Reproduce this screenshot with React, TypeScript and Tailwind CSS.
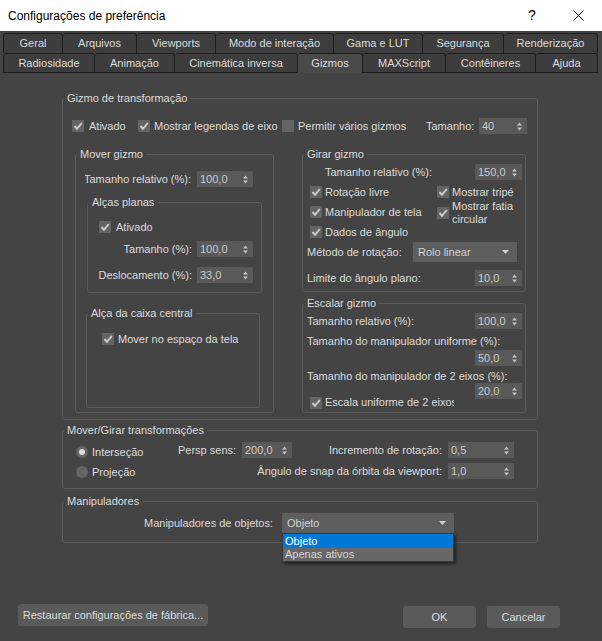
import React from 'react';

const row1 = [
  ['Geral', 'w-[60px]'],
  ['Arquivos', 'w-[74px]'],
  ['Viewports', 'w-[79px]'],
  ['Modo de interação', 'w-[118px]'],
  ['Gama e LUT', 'w-[89px]'],
  ['Segurança', 'w-[81px]'],
  ['Renderização', 'w-[94px]'],
];

const row2 = [
  ['Radiosidade', 'w-[92px]'],
  ['Animação', 'w-[80px]'],
  ['Cinemática inversa', 'w-[123px]'],
  ['Gizmos', 'w-[65px]'],
  ['MAXScript', 'w-[83px]'],
  ['Contêineres', 'w-[90px]'],
  ['Ajuda', 'w-[62px]'],
];

function Arrows() {
  return (
    <svg width="5" height="9" viewBox="0 0 5 9" className="shrink-0">
      <path d="M0 3.5 L2.5 0.5 L5 3.5 Z M0 5.5 L2.5 8.5 L5 5.5 Z" fill="#c4c4c4" />
    </svg>
  );
}

function Spin({ v, className = '' }: { v: string; className?: string }) {
  return (
    <div className={`flex h-[16px] shrink-0 items-center justify-between bg-[#595959] pl-[3px] pr-[5px] text-[#cacaca] ${className}`}>
      <span>{v}</span>
      <Arrows />
    </div>
  );
}

function Check({ on = true }: { on?: boolean }) {
  return (
    <span className="flex h-[12px] w-[12px] shrink-0 items-center justify-center bg-[#646464]">
      {on && (
        <svg width="10" height="10" viewBox="0 0 10 10">
          <path d="M1.5 5 L4 7.8 L8.8 2" fill="none" stroke="#cfcfcf" strokeWidth="1.9" />
        </svg>
      )}
    </span>
  );
}

function Radio({ on }: { on?: boolean }) {
  return (
    <span className="flex h-[12px] w-[12px] shrink-0 items-center justify-center rounded-full bg-[#646464]">
      {on && <span className="h-[6px] w-[6px] rounded-full bg-[#dedede]" />}
    </span>
  );
}

function Select({ value, className = '' }: { value: string; className?: string }) {
  return (
    <div className={`flex items-center justify-between bg-[#5e5e5e] pl-[5px] pr-[8px] text-[#d2d2d2] ${className}`}>
      <span>{value}</span>
      <svg width="7" height="4" viewBox="0 0 7 4">
        <path d="M0 0 H7 L3.5 4 Z" fill="#d0d0d0" />
      </svg>
    </div>
  );
}

function Group({ title, className = '', children }: { title: string; className?: string; children?: React.ReactNode }) {
  return (
    <fieldset className={`shrink-0 rounded-[3px] border border-[#5b5b5b] ${className}`}>
      <legend className="ml-[1px] px-[3px] leading-[13px]">{title}</legend>
      {children}
    </fieldset>
  );
}

function Tab({ label, w, first, active, bottom }: { label: string; w: string; first?: boolean; active?: boolean; bottom?: boolean }) {
  return (
    <div
      className={`flex h-[20px] items-center justify-center rounded-t-[3px] border-t border-r border-[#1c1c1c] ${w} ${first ? 'border-l' : ''} ${
        active ? 'bg-[#4a4a4a]' : 'bg-[#3d3d3d]'
      } ${bottom && !active ? 'border-b' : ''}`}
    >
      {label}
    </div>
  );
}

export default function App() {
  return (
    <div className="flex h-[641px] w-[602px] flex-col overflow-hidden bg-[#444444] font-['Liberation_Sans',Arial,sans-serif] text-[11px] text-[#dcdcdc]">
      {/* title bar */}
      <div className="flex h-[31px] shrink-0 items-center bg-white pl-[8px] text-[12px] text-black">
        <span className="flex-1">Configurações de preferência</span>
        <span className="flex h-full w-[46px] items-center justify-center text-[14px]">?</span>
        <span className="mr-[1px] flex h-full w-[46px] items-center justify-center">
          <svg width="11" height="11" viewBox="0 0 11 11">
            <path d="M0.5 0.5 L10.5 10.5 M10.5 0.5 L0.5 10.5" stroke="#111" strokeWidth="1" />
          </svg>
        </span>
      </div>

      {/* tabs */}
      <div className="mt-[2px] flex shrink-0 px-[3px]">
        {row1.map(([l, w], i) => (
          <Tab key={l} label={l} w={w} first={i === 0} />
        ))}
      </div>
      <div className="flex shrink-0 px-[3px]">
        {row2.map(([l, w], i) => (
          <Tab key={l} label={l} w={w} first={i === 0} active={l === 'Gizmos'} bottom />
        ))}
      </div>

      {/* transform gizmo */}
      <Group title="Gizmo de transformação" className="ml-[62px] mt-[19px] h-[328px] w-[476px]">
        <div className="mt-[13px] flex h-[16px] items-center pl-[9px]">
          <label className="flex w-[66px] items-center gap-[5px]">
            <Check />
            Ativado
          </label>
          <label className="flex w-[144px] items-center gap-[4px]">
            <Check />
            Mostrar legendas de eixo
          </label>
          <label className="flex w-[144px] items-center gap-[4px]">
            <Check on={false} />
            Permitir vários gizmos
          </label>
          <span className="w-[53px]">Tamanho:</span>
          <Spin v="40" className="w-[48px]" />
        </div>

        <div className="mt-[14px] flex pl-[12px]">
          <Group title="Mover gizmo" className="h-[265px] w-[199px]">
            <div className="mt-[10px] flex h-[16px] items-center pl-[9px]">
              <span className="flex w-[106px] justify-end overflow-hidden whitespace-nowrap">Tamanho relativo (%):</span>
              <Spin v="100,0" className="ml-[6px] w-[56px]" />
            </div>

            <Group title="Alças planas" className="ml-[11px] mt-[9px] h-[97px] w-[175px]">
              <label className="mt-[10px] flex h-[16px] items-center gap-[5px] pl-[11px]">
                <Check />
                Ativado
              </label>
              <div className="mt-[6px] flex h-[16px] items-center">
                <span className="w-[104px] text-right">Tamanho (%):</span>
                <Spin v="100,0" className="ml-[5px] w-[56px]" />
              </div>
              <div className="mt-[10px] flex h-[16px] items-center">
                <span className="w-[104px] text-right">Deslocamento (%):</span>
                <Spin v="33,0" className="ml-[5px] w-[56px]" />
              </div>
            </Group>

            <Group title="Alça da caixa central" className="ml-[10px] mt-[14px] h-[101px] w-[174px]">
              <label className="mt-[11px] flex h-[16px] items-center gap-[4px] pl-[15px]">
                <Check />
                Mover no espaço da tela
              </label>
            </Group>
          </Group>

          <div className="ml-[28px] flex w-[224px] flex-col">
            <Group title="Girar gizmo" className="h-[144px] w-[224px]">
              <div className="mt-[3px] flex h-[16px] items-center pl-[22px] pr-[3px]">
                <span className="flex-1">Tamanho relativo (%):</span>
                <Spin v="150,0" className="w-[47px]" />
              </div>
              <div className="mt-[4px] flex pl-[7px]">
                <div className="flex w-[127px] flex-col gap-[4px]">
                  <label className="flex h-[16px] items-center gap-[3px]">
                    <Check />
                    Rotação livre
                  </label>
                  <label className="flex h-[16px] items-center gap-[3px]">
                    <Check />
                    Manipulador de tela
                  </label>
                  <label className="flex h-[16px] items-center gap-[3px]">
                    <Check />
                    Dados de ângulo
                  </label>
                </div>
                <div className="flex flex-col">
                  <label className="flex h-[16px] items-center gap-[3px]">
                    <Check />
                    Mostrar tripé
                  </label>
                  <label className="flex h-[26px] items-center gap-[3px] leading-[13px]">
                    <Check />
                    <span>
                      Mostrar fatia
                      <br />
                      circular
                    </span>
                  </label>
                </div>
              </div>
              <div className="mt-[2px] flex h-[20px] items-center pl-[4px]">
                <span className="w-[106px]">Método de rotação:</span>
                <Select value="Rolo linear" className="h-[20px] w-[104px]" />
              </div>
              <div className="mt-[8px] flex h-[16px] items-center pl-[4px] pr-[3px]">
                <span className="flex-1">Limite do ângulo plano:</span>
                <Spin v="10,0" className="w-[47px]" />
              </div>
            </Group>

            <Group title="Escalar gizmo" className="mt-[5px] h-[116px] w-[224px]">
              <div className="mt-[3px] flex h-[16px] items-center pl-[4px] pr-[3px]">
                <span className="flex-1">Tamanho relativo (%):</span>
                <Spin v="100,0" className="w-[47px]" />
              </div>
              <div className="mt-[6px] pl-[4px] leading-[13px]">Tamanho do manipulador uniforme (%):</div>
              <div className="mt-[2px] flex justify-end pr-[3px]">
                <Spin v="50,0" className="w-[47px]" />
              </div>
              <div className="mt-[4px] pl-[4px] leading-[13px]">Tamanho do manipulador de 2 eixos (%):</div>
              <div className="flex h-[28px] justify-between pl-[7px] pr-[3px]">
                <label className="mb-[2px] flex items-center gap-[3px] self-end">
                  <Check />
                  <span className="w-[129px] overflow-hidden whitespace-nowrap leading-[13px]">Escala uniforme de 2 eixos</span>
                </label>
                <Spin v="20,0" className="w-[47px]" />
              </div>
            </Group>
          </div>
        </div>
      </Group>

      {/* move/rotate transforms */}
      <Group title="Mover/Girar transformações" className="ml-[62px] mt-[4px] h-[65px] w-[476px]">
        <div className="flex">
          <div className="mt-[7px] flex w-[115px] flex-col gap-[4px] pl-[13px]">
            <label className="flex h-[16px] items-center gap-[4px]">
              <Radio on />
              Interseção
            </label>
            <label className="flex h-[16px] items-center gap-[4px]">
              <Radio />
              Projeção
            </label>
          </div>
          <div className="mt-[5px] flex w-[336px] flex-col gap-[5px]">
            <div className="flex h-[16px] items-center">
              <span className="w-[64px]">Persp sens:</span>
              <Spin v="200,0" className="w-[50px]" />
              <span className="flex-1 text-right">Incremento de rotação:</span>
              <Spin v="0,5" className="ml-[6px] w-[66px]" />
            </div>
            <div className="flex h-[16px] items-center">
              <span className="flex-1 text-right">Ângulo de snap da órbita da viewport:</span>
              <Spin v="1,0" className="ml-[6px] w-[66px]" />
            </div>
          </div>
        </div>
      </Group>

      {/* manipulators */}
      <Group title="Manipuladores" className="ml-[62px] mt-[6px] h-[48px] w-[476px]">
        <div className="mt-[5px] flex h-[20px] items-center pl-[81px]">
          <span>Manipuladores de objetos:</span>
          <div className="relative ml-[9px]">
            <Select value="Objeto" className="h-[20px] w-[172px]" />
            <div className="absolute left-0 top-full z-10 w-[172px] border border-[#3a3a3a] bg-[#676767] shadow-[2px_2px_3px_rgba(0,0,0,0.55)]">
              <div className="h-[14px] bg-[#0078d7] pl-[2px] leading-[14px] text-white">Objeto</div>
              <div className="h-[13px] pl-[2px] leading-[13px] text-[#d4d4d4]">Apenas ativos</div>
            </div>
          </div>
        </div>
      </Group>

      <div className="flex-1" />

      {/* bottom buttons */}
      <div className="flex shrink-0 items-end pb-[13px] pl-[18px] pr-[42px]">
        <button className="mb-[2px] h-[22px] w-[190px] rounded-[3px] bg-[#5a5a5a] text-[#dcdcdc]">
          Restaurar configurações de fábrica...
        </button>
        <button className="ml-auto h-[22px] w-[73px] rounded-[3px] bg-[#5a5a5a] text-[#dcdcdc]">OK</button>
        <button className="ml-[11px] h-[22px] w-[73px] rounded-[3px] bg-[#5a5a5a] text-[#dcdcdc]">Cancelar</button>
      </div>
    </div>
  );
}
